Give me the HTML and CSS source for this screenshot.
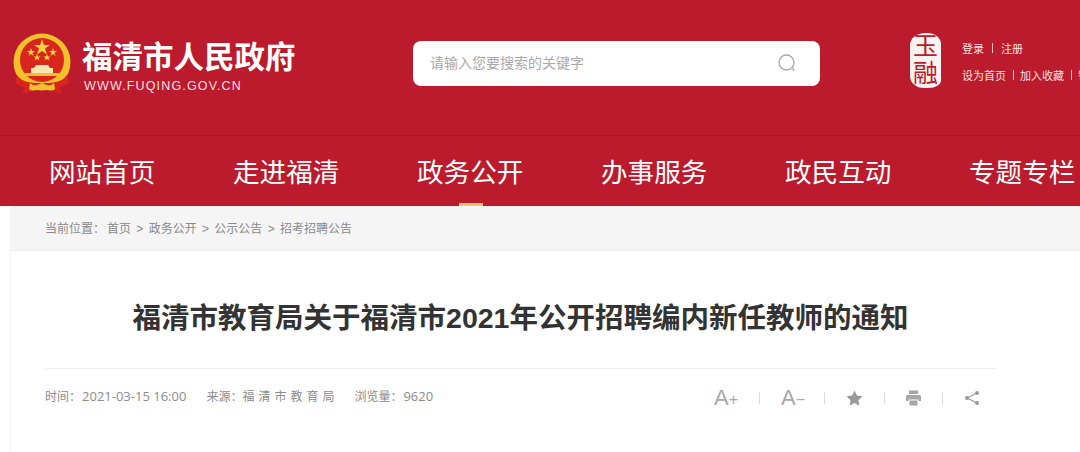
FILE: index.html
```html
<!DOCTYPE html>
<html lang="zh-CN">
<head>
  <meta charset="UTF-8">
  <meta name="viewport" content="width=device-width, initial-scale=1.0">
  <title>福清市教育局关于福清市2021年公开招聘编内新任教师的通知</title>
  <link rel="stylesheet" href="styles.css">
</head>
<body>

<header class="top-bar">
  <div class="brand">
    <svg class="emblem" width="60" height="64" viewBox="0 0 60 64">
      <circle cx="29" cy="29" r="28.5" fill="#f2c029"/>
      <circle cx="29" cy="27" r="22" fill="#d8261c"/>
      <polygon points="29,6 31,12 37,12 32,15.500 34,21.500 29,18 24,21.500 26,15.500 21,12 27,12" fill="#f6d13c"/>
      <polygon points="18,15 19,18 22,18 19.500,20 20.500,23 18,21 15.500,23 16.500,20 14,18 17,18" fill="#f6d13c"/>
      <polygon points="40,15 41,18 44,18 41.500,20 42.500,23 40,21 37.500,23 38.500,20 36,18 39,18" fill="#f6d13c"/>
      <polygon points="24,21 25,23.500 27.500,23.500 25.500,25 26.500,27.500 24,26 21.500,27.500 22.500,25 20.500,23.500 23,23.500" fill="#f6d13c"/>
      <polygon points="34,21 35,23.500 37.500,23.500 35.500,25 36.500,27.500 34,26 31.500,27.500 32.500,25 30.500,23.500 33,23.500" fill="#f6d13c"/>
      <path d="M23 32h12l2 3h3v5H18v-5h3z" fill="#f6e7b0"/>
      <path d="M12 40h34v3H12z" fill="#f2c029"/>
      <path d="M4 42c6 8 14 8 25 8s19 0 25-8l2 8-10 5 3 6-10-3-10-4-10 4-10 3 3-6-10-5z" fill="#d8261c"/>
      <path d="M17 50c4 4 8 2 12 0 4 2 8 4 12 0l1 6c-4 3-9 1-13-1-4 2-9 4-13 1z" fill="#f2c029"/>
    </svg>
    <div class="brand-text">
      <div class="site-name">福清市人民政府</div>
      <div class="site-url">WWW.FUQING.GOV.CN</div>
    </div>
  </div>

  <div class="search-box">
    <span class="search-hint">请输入您要搜索的关键字</span>
    <svg class="search-icon" width="20" height="20" viewBox="0 0 20 20" fill="none" stroke="#a8a8a8" stroke-width="1.300">
      <circle cx="9.500" cy="9.500" r="7.500"/>
      <path d="M15 15l2.500 2.500"/>
    </svg>
  </div>

  <div class="seal"><span>玉</span><span>融</span></div>

  <div class="user-links">
    <div class="link-row login-row"><span>登录</span><i class="bar"></i><span>注册</span></div>
    <div class="link-row"><span>设为首页</span><i class="bar"></i><span>加入收藏</span><i class="bar"></i><span>智能</span></div>
  </div>
</header>

<nav class="main-nav">
  <a>网站首页</a>
  <a>走进福清</a>
  <a class="current">政务公开</a>
  <a>办事服务</a>
  <a>政民互动</a>
  <a>专题专栏</a>
</nav>

<div class="page-wrap">
  <div class="crumbs"><span class="crumb-label">当前位置：</span>首页 &gt; 政务公开 &gt; 公示公告 &gt; 招考招聘公告</div>

  <main class="article">
    <h1>福清市教育局关于福清市2021年公开招聘编内新任教师的通知</h1>

    <div class="meta-row">
      <div class="meta-info">
        <span>时间：<span class="num">2021-03-15 16:00</span></span>
        <span>来源：<span class="spaced">福清市教育局</span></span>
        <span>浏览量：<span class="num">9620</span></span>
      </div>
      <div class="tools">
        <span class="tool-text">A<small>+</small></span>
        <i class="sep"></i>
        <span class="tool-text minus">A<small>−</small></span>
        <i class="sep"></i>
        <svg width="17" height="16" viewBox="0 0 18 17"><path d="M9 .5l2.600 5.400 5.900.8-4.300 4.100 1 5.900L9 13.900l-5.200 2.800 1-5.900L.5 6.700l5.900-.8z" fill="#9a9a9a"/></svg>
        <i class="sep"></i>
        <svg width="15" height="16" viewBox="0 0 15 16" fill="#a6a6a6"><path d="M3 .5h9v3.500H3z"/><path d="M1.500 5h12a1.500 1.500 0 0 1 1.500 1.500V11h-2.500V9.500h-10V11H0V6.500A1.500 1.500 0 0 1 1.500 5z"/><path d="M3.500 10.500h8v5h-8z"/></svg>
        <i class="sep"></i>
        <svg width="16" height="16" viewBox="0 0 16 16" fill="#9a9a9a" stroke="#9a9a9a"><path d="M13 3L3 8l10 5" fill="none" stroke-width="1.200"/><circle cx="13" cy="3" r="2" stroke="none"/><circle cx="3" cy="8" r="2" stroke="none"/><circle cx="13" cy="13" r="2" stroke="none"/></svg>
      </div>
    </div>
  </main>
</div>

</body>
</html>
```

FILE: styles.css
```css
html, body {
  margin: 0;
  height: 452px;
  overflow: hidden;
  background-color: #fff;
  font-family: "Liberation Sans", "Noto Sans CJK SC", sans-serif;
}

.top-bar {
  display: flex;
  align-items: flex-start;
  height: 135px;
  background-color: #bc1a2d;
  white-space: nowrap;
}

.top-bar > * {
  flex: none;
}

.brand {
  display: flex;
  width: 413px;
  padding: 33px 0 0 13px;
  box-sizing: border-box;
}

.emblem {
  flex: none;
}

.brand-text {
  margin: 6px 0 0 9px;
  color: #fff;
}

.site-name {
  font-size: 30.500px;
  line-height: 36px;
  font-weight: bold;
}

.site-url {
  margin: 4px 0 0 2px;
  font-size: 12.500px;
  line-height: 15px;
  letter-spacing: 1.150px;
  color: #f8dfe0;
}

.search-box {
  display: flex;
  align-items: center;
  justify-content: space-between;
  width: 407px;
  height: 45px;
  margin-top: 41px;
  padding: 0 23px 0 17px;
  box-sizing: border-box;
  background-color: #fff;
  border-radius: 8px;
}

.search-hint {
  margin-bottom: 4px;
  font-size: 14px;
  color: #a9a9a9;
}

.search-icon {
  margin-bottom: 1px;
}

.seal {
  display: flex;
  flex-direction: column;
  align-items: center;
  width: 31px;
  height: 55px;
  margin: 33px 0 0 90px;
  background-color: #fbf3f1;
  border-radius: 50% 45% 40% 45% / 22% 20% 14% 22%;
  color: #bc1a2d;
  font-size: 25px;
  line-height: 27px;
}

.user-links {
  margin: 41px 0 0 21px;
  font-size: 11px;
  color: #fbe3e3;
}

.link-row {
  display: flex;
  align-items: center;
  height: 14px;
  margin-bottom: 13px;
}

.bar {
  width: 1px;
  height: 10px;
  margin: 0 6.500px;
  background-color: #f4bcc0;
}

.login-row .bar {
  margin: 0 8px;
}

.main-nav {
  display: flex;
  gap: 78px;
  height: 70px;
  padding-left: 49px;
  border-top: 1px solid #a3182a;
  background-color: #bc1a2d;
  white-space: nowrap;
}

.main-nav a {
  position: relative;
  flex: none;
  width: 106px;
  font-size: 26.600px;
  line-height: 74px;
  color: #fff;
}

.main-nav .current::after {
  content: "";
  position: absolute;
  left: 42px;
  bottom: 0;
  width: 24px;
  height: 3px;
  background-color: #f4c26b;
}

.page-wrap {
  height: 246px;
  margin-left: 10px;
  border-left: 1px solid #f4f4f4;
}

.crumbs {
  height: 44px;
  padding-left: 34px;
  background-color: #f5f5f5;
  border-bottom: 1px solid #ececec;
  font-size: 12px;
  line-height: 46px;
  word-spacing: 2px;
  color: #8a8a8a;
}

.crumb-label {
  margin-right: 2px;
}

.article {
  width: 951px;
  margin-left: 34px;
}

.article h1 {
  margin: 0;
  padding-top: 49px;
  height: 68px;
  font-size: 28.500px;
  line-height: 36px;
  font-weight: bold;
  text-align: center;
  color: #333;
}

.meta-row {
  display: flex;
  justify-content: space-between;
  align-items: center;
  height: 57px;
  border-top: 1px solid #f0f0f0;
}

.meta-info {
  display: flex;
  gap: 20px;
  padding-bottom: 4px;
  font-size: 12px;
  white-space: nowrap;
  color: #8c8c8c;
}

.num {
  margin-left: 1px;
  font-family: "Open Sans", sans-serif;
  font-size: 13px;
}

.spaced {
  margin-right: -4px;
  letter-spacing: 4px;
}

.tools {
  display: flex;
  align-items: center;
  gap: 21px;
  padding-right: 16px;
}

.tool-text {
  width: 24px;
  font-size: 22px;
  color: #a8a8a8;
}

.tool-text.minus {
  width: 22px;
}

.tool-text small {
  font-size: 16px;
}

.sep {
  width: 1px;
  height: 12px;
  background-color: #dcdcdc;
}
```
